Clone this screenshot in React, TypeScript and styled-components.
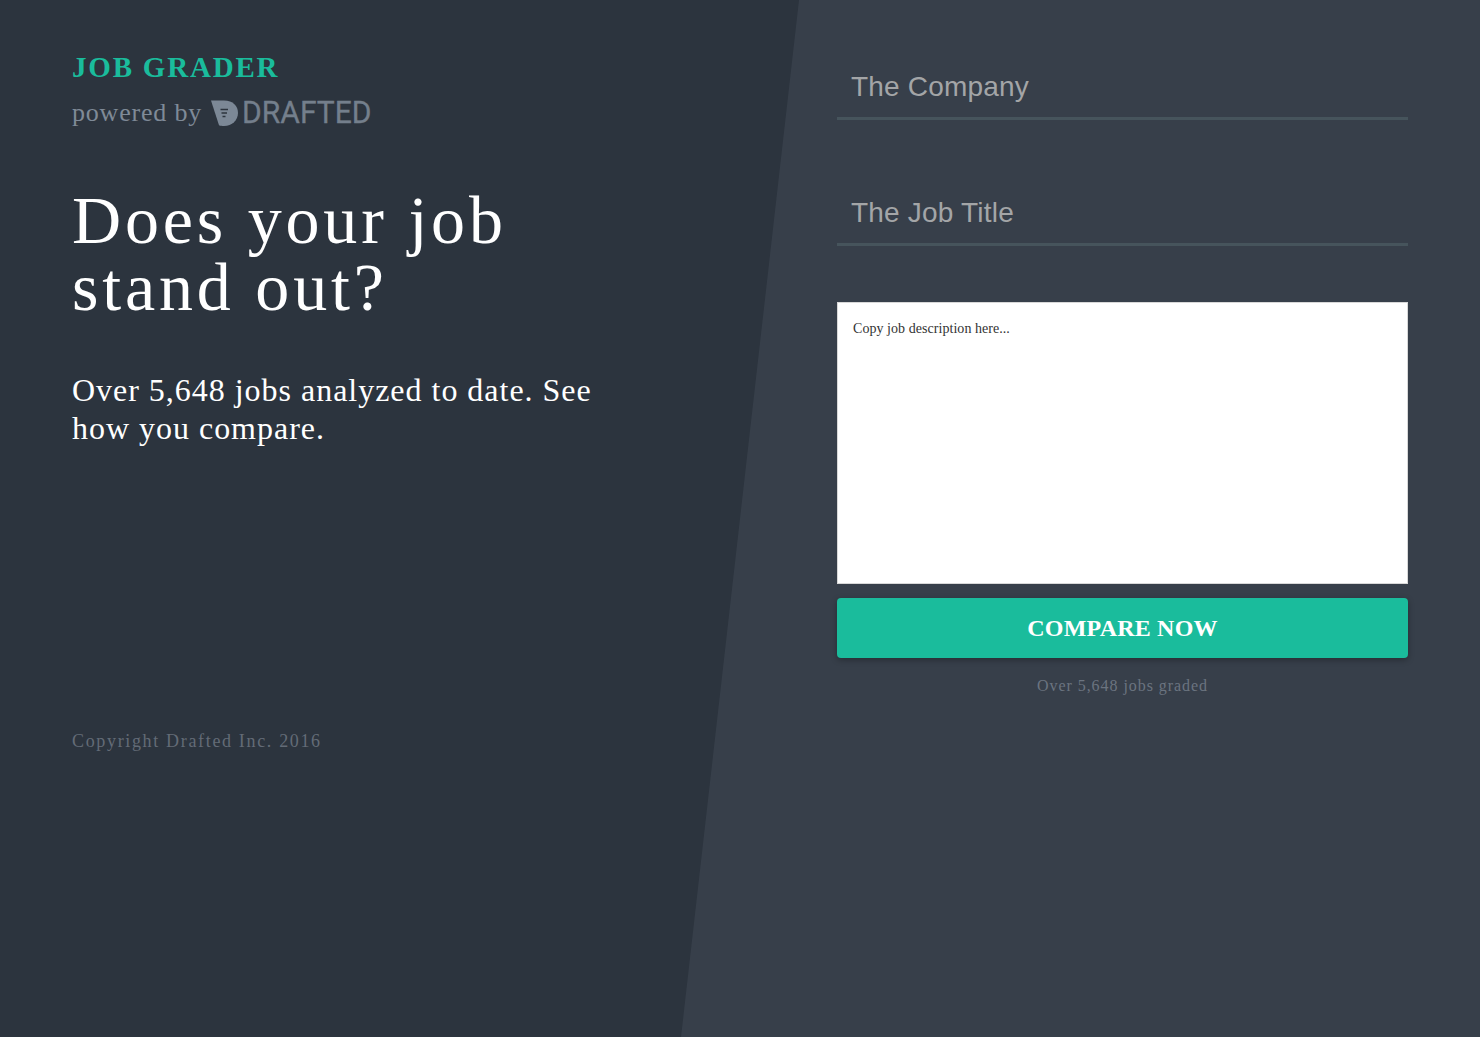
import React from "react";
import styled, { createGlobalStyle } from "styled-components";

const Global = createGlobalStyle`
  html, body { margin: 0; padding: 0; height: 100%; background: #373f4a; }
  #root { height: 100%; }
  * { box-sizing: border-box; }
`;

const Page = styled.div`
  position: relative;
  width: 1480px;
  height: 1037px;
  overflow: hidden;
  background: #373f4a;
  display: grid;
  grid-template-columns: 837px 571px;
  font-family: "Liberation Serif", "Times New Roman", serif;
`;

const Slant = styled.div`
  position: absolute;
  inset: 0;
  background: #2c343e;
  clip-path: polygon(0 0, 799px 0, 681px 100%, 0 100%);
`;

const Intro = styled.section`
  position: relative;
  padding: 50px 0 0 72px;
  display: flex;
  flex-direction: column;
`;

const Brand = styled.div`
  color: #1abc9c;
  font-size: 29px;
  line-height: 34px;
  font-weight: 700;
  letter-spacing: 1.8px;
`;

const PoweredRow = styled.div`
  display: flex;
  align-items: center;
  height: 36px;
  margin-top: 11px;
  color: #7f8a97;
  font-size: 26px;
  letter-spacing: 0.8px;
`;

const Mark = styled.svg`
  width: 28px;
  height: 28px;
  margin-left: 9px;
  margin-right: 3px;
  flex: none;
`;

const Wordmark = styled.span`
  display: inline-block;
  font-family: Roboto, "Liberation Sans", sans-serif;
  font-size: 31px;
  line-height: 36px;
  letter-spacing: 0;
  color: #747f8c;
  -webkit-text-stroke: 0.3px #747f8c;
  transform: scaleX(0.97);
  transform-origin: left center;
`;

const Headline = styled.h1`
  margin: 56px 0 0;
  width: 560px;
  color: #fff;
  font-size: 68px;
  line-height: 67px;
  font-weight: 400;
  letter-spacing: 3.8px;
`;

const Lead = styled.p`
  margin: 50px 0 0;
  width: 560px;
  color: #fff;
  font-size: 32px;
  line-height: 38px;
  letter-spacing: 0.98px;
`;

const Copyright = styled.p`
  margin: 282px 0 0;
  color: #636b76;
  font-size: 18px;
  line-height: 24px;
  letter-spacing: 1.66px;
`;

const Form = styled.section`
  position: relative;
  display: flex;
  flex-direction: column;
  padding-top: 60px;
`;

const Field = styled.input`
  display: block;
  width: 100%;
  height: 60px;
  margin-bottom: 66px;
  padding: 0 14px 4px;
  border: 0;
  border-bottom: 3px solid #46545c;
  background: transparent;
  outline: none;
  font-family: "Liberation Sans", Arial, sans-serif;
  font-size: 28px;
  letter-spacing: 0.2px;
  color: #a3a5a7;
  &::placeholder { color: #a3a5a7; opacity: 1; }
`;

const Description = styled.textarea`
  display: block;
  width: 100%;
  height: 282px;
  margin-top: -10px;
  padding: 17px 15px;
  border: 1px solid #d8d8d8;
  border-radius: 0;
  background: #fff;
  outline: none;
  resize: none;
  font-family: "Liberation Serif", "Times New Roman", serif;
  font-size: 14px;
  line-height: 18px;
  letter-spacing: 0.05px;
  color: #333;
  &::placeholder { color: #333; opacity: 1; }
`;

const Submit = styled.button`
  display: block;
  width: 100%;
  height: 60px;
  margin-top: 14px;
  border: 0;
  border-radius: 4px;
  background: #1abc9c;
  color: #fff;
  box-shadow: 0 2px 6px rgba(0, 0, 0, 0.3);
  font-family: "Liberation Serif", "Times New Roman", serif;
  font-size: 24px;
  font-weight: 700;
  letter-spacing: 0.2px;
`;

const Note = styled.p`
  margin: 18px 0 0;
  text-align: center;
  color: #6b7480;
  font-size: 16px;
  line-height: 20px;
  letter-spacing: 0.95px;
`;

export default function App() {
  return (
    <Page>
      <Global />
      <Slant />
      <Intro>
        <Brand>JOB GRADER</Brand>
        <PoweredRow>
          powered by
          <Mark viewBox="0 0 28 28" aria-hidden="true">
            <path
              d="M0 1.5 H13 C22 1.5 27 7 27 14 C27 21 21 27 13 27 C11 27 9.5 26.8 8 26.2 Z"
              fill="#7c8896"
            />
            <path d="M9.5 10.5 H17 M10.5 14 H16 M11.5 17.5 H14.5" stroke="#2c343e" strokeWidth="1.7" fill="none" />
          </Mark>
          <Wordmark>DRAFTED</Wordmark>
        </PoweredRow>
        <Headline>Does your job stand out?</Headline>
        <Lead>Over 5,648 jobs analyzed to date. See how you compare.</Lead>
        <Copyright>Copyright Drafted Inc. 2016</Copyright>
      </Intro>
      <Form>
        <Field placeholder="The Company" />
        <Field placeholder="The Job Title" />
        <Description placeholder="Copy job description here..." />
        <Submit>COMPARE NOW</Submit>
        <Note>Over 5,648 jobs graded</Note>
      </Form>
    </Page>
  );
}
